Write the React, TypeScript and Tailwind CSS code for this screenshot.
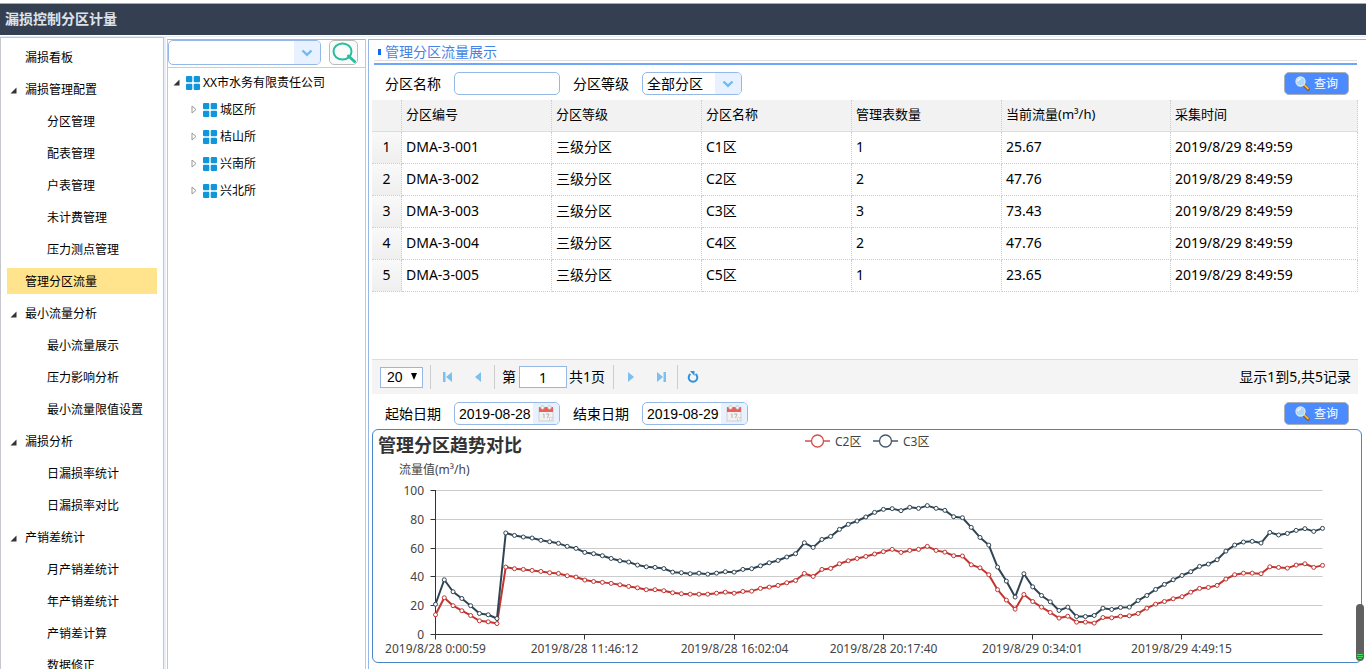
import { useState } from "react";
import type { ReactNode } from "react";

interface MenuItem {
	label: string;
	children?: string[];
}

interface ZoneRow {
	code: string;
	level: string;
	name: string;
	meters: number;
	flow: string;
	time: string;
}

const MENU: MenuItem[] = [
	{ label: "漏损看板" },
	{
		label: "漏损管理配置",
		children: ["分区管理", "配表管理", "户表管理", "未计费管理", "压力测点管理"],
	},
	{ label: "管理分区流量" },
	{
		label: "最小流量分析",
		children: ["最小流量展示", "压力影响分析", "最小流量限值设置"],
	},
	{ label: "漏损分析", children: ["日漏损率统计", "日漏损率对比"] },
	{
		label: "产销差统计",
		children: ["月产销差统计", "年产销差统计", "产销差计算", "数据修正"],
	},
];

const STATIONS = ["城区所", "桔山所", "兴南所", "兴北所"];

const HEADERS = [
	"分区编号",
	"分区等级",
	"分区名称",
	"管理表数量",
	"当前流量(m³/h)",
	"采集时间",
];

const ROWS: ZoneRow[] = [
	{ code: "DMA-3-001", level: "三级分区", name: "C1区", meters: 1, flow: "25.67", time: "2019/8/29 8:49:59" },
	{ code: "DMA-3-002", level: "三级分区", name: "C2区", meters: 2, flow: "47.76", time: "2019/8/29 8:49:59" },
	{ code: "DMA-3-003", level: "三级分区", name: "C3区", meters: 3, flow: "73.43", time: "2019/8/29 8:49:59" },
	{ code: "DMA-3-004", level: "三级分区", name: "C4区", meters: 2, flow: "47.76", time: "2019/8/29 8:49:59" },
	{ code: "DMA-3-005", level: "三级分区", name: "C5区", meters: 1, flow: "23.65", time: "2019/8/29 8:49:59" },
];

const C2 = [
	13.7, 25.5, 20, 16.5, 13.2, 9.5, 8.8, 7.6, 46.8, 45.7, 45.2, 44.5, 43.8, 42.9,
	42.4, 40.8, 39.9, 37.8, 36.8, 36.2, 35.5, 34.5, 33.4, 32.4, 31.1, 31.1, 30.4,
	29, 28.3, 28, 28, 28, 28.7, 29.4, 28.7, 29.9, 30.1, 32, 32.9, 34.1, 35.9,
	37.5, 42.4, 40.3, 45.2, 45.9, 49.1, 51.2, 52.8, 54.2, 55.9, 57.5, 59.1, 57,
	58.4, 59.1, 61.2, 58.4, 57.2, 54.7, 54.5, 48.4, 46.3, 41.5, 31.1, 23.9, 17.6,
	27.8, 22.9, 19, 15.3, 11.4, 12.7, 8.6, 8.6, 7.9, 11.8, 11.6, 12.7, 13, 14.6,
	18.3, 21.1, 22.9, 24.8, 26.2, 29.4, 32, 32.7, 34.1, 38.5, 41.5, 42.6, 42.6,
	42.2, 47, 46.6, 46.1, 48.2, 49.1, 46.6, 48,
];

const C3 = [
	21, 38, 29.7, 25, 20, 14.6, 13.7, 11.1, 70.5, 68.8, 67.7, 67, 65.4, 64.4,
	63.3, 61.2, 59.8, 57, 56.1, 54.7, 52.8, 51.2, 50.3, 48.2, 47, 46.6, 45.8,
	43.3, 42.9, 42.2, 42.6, 41.9, 42.6, 43.6, 43.3, 45.2, 45.7, 47.7, 49.8, 51.4,
	53.8, 56.1, 63.7, 60.5, 66, 68.1, 73, 76.5, 78.8, 81.6, 84.8, 86.9, 87.4, 86,
	88.3, 87.6, 89.5, 87.6, 86.2, 81.8, 81.1, 74.4, 67.4, 62.1, 46.8, 37.1, 26,
	42.2, 33.1, 27.1, 22.7, 16.7, 19, 12.5, 12.5, 13.2, 18.3, 17.4, 18.8, 19,
	23.6, 27.1, 31.3, 34.8, 38, 41, 43.6, 47.3, 48.9, 51.9, 57.9, 62.1, 64.2,
	64.7, 63.5, 70.9, 69.1, 70.2, 72.3, 73.5, 71.6, 73.7,
];

const TIMES = [
	"2019/8/28 0:00:59",
	"2019/8/28 11:46:12",
	"2019/8/28 16:02:04",
	"2019/8/28 20:17:40",
	"2019/8/29 0:34:01",
	"2019/8/29 4:49:15",
];

// Plot area inside the chart's viewBox
const LEFT = 62.5;
const RIGHT = 949.5;
const BOTTOM = 204.5;
const UNIT = 1.44;
const LABEL_EVERY = 17;

const px = (i: number) => LEFT + (i * (RIGHT - LEFT)) / (C2.length - 1);
const py = (v: number) => BOTTOM - v * UNIT;

function OpenArrow() {
	return (
		<svg viewBox="0 0 7 7" className="h-[7px] w-[7px] shrink-0">
			<path d="M6.5 0.5V6.5H0.5Z" fill="#333" />
		</svg>
	);
}

function ClosedArrow() {
	return (
		<svg viewBox="0 0 6 9" className="h-[9px] w-[6px] shrink-0">
			<path d="M1 1L5 4.5L1 8Z" fill="#fff" stroke="#999" />
		</svg>
	);
}

function GridIcon() {
	return (
		<svg viewBox="0 0 14 14" className="h-3.5 w-3.5 shrink-0" fill="#1296db">
			<rect width="6.3" height="6.3" rx="1" />
			<rect x="7.7" width="6.3" height="6.3" rx="1" />
			<rect y="7.7" width="6.3" height="6.3" rx="1" />
			<rect x="7.7" y="7.7" width="6.3" height="6.3" rx="1" />
		</svg>
	);
}

function ComboArrow() {
	return (
		<span className="pointer-events-none absolute inset-y-px right-px flex w-[26px] items-center justify-center rounded-r bg-[#e8f1ff]">
			<svg viewBox="0 0 12 8" className="h-2 w-3">
				<path d="M1.5 1.5L6 5.8L10.5 1.5" fill="none" stroke="#6ebbf0" strokeWidth="2.4" />
			</svg>
		</span>
	);
}

function CalendarIcon() {
	return (
		<svg viewBox="0 0 16 17" className="h-[17px] w-4">
			<rect x="1" y="3" width="14" height="13" fill="#f1f1f1" stroke="#d0d0d0" />
			<rect x="1" y="2" width="14" height="5" fill="#ec5f59" />
			<circle cx="4.5" cy="2.5" r="1.8" fill="#f4f4f4" stroke="#bbb" strokeWidth="0.7" />
			<circle cx="11.5" cy="2.5" r="1.8" fill="#f4f4f4" stroke="#bbb" strokeWidth="0.7" />
			<path d="M5 9.5L6 9V13M8 9H11L9.5 13" fill="none" stroke="#b5b5b5" />
			<path d="M11.5 16V12.5H15Z" fill="#fff" stroke="#c8c8c8" strokeWidth="0.7" />
		</svg>
	);
}

function QueryButton() {
	return (
		<button
			type="button"
			className="ml-auto flex h-[23px] w-[65px] items-center justify-center gap-1 rounded-[5px] border border-[#aab0b8] bg-[#4b8bff] text-xs text-white"
		>
			<svg viewBox="0 0 15 15" className="h-[15px] w-[15px]">
				<path d="M8.5 8.5L13 13" stroke="#8a5a1c" strokeWidth="3.4" strokeLinecap="round" />
				<path d="M9.3 8.9L13 12.5" stroke="#f6b53c" strokeWidth="1.8" strokeLinecap="round" />
				<circle cx="5.5" cy="5.5" r="4.5" fill="#a9d8fa" stroke="#dbe8f3" strokeWidth="1.3" />
				<path d="M3 5.2A2.6 2.6 0 0 1 6 2.8" fill="none" stroke="#fff" strokeWidth="1.2" />
			</svg>
			查询
		</button>
	);
}

function DateField({ id, label, value }: { id: string; label: string; value: string }) {
	return (
		<>
			<label htmlFor={id}>{label}</label>
			<div className="flex h-[23px] w-[106px] overflow-hidden rounded-[5px] border border-[#95b8e7]">
				<input
					id={id}
					type="text"
					defaultValue={value}
					className="w-0 grow pl-1 font-['Liberation_Sans',sans-serif] outline-none"
				/>
				<button
					type="button"
					aria-label={`选择${label}`}
					className="flex w-[26px] items-center justify-center bg-[#e8f1ff]"
				>
					<CalendarIcon />
				</button>
			</div>
		</>
	);
}

function PagerButton({ label, children }: { label: string; children: ReactNode }) {
	return (
		<button
			type="button"
			aria-label={label}
			className="flex h-6 w-[30px] items-center justify-center text-[#7cc0f0]"
		>
			{children}
		</button>
	);
}

function Separator() {
	return <span className="h-6 w-px bg-[#ccc]" />;
}

function Sidebar() {
	const [active, setActive] = useState("管理分区流量");
	return (
		<nav className="w-[164px] shrink-0 overflow-hidden border border-b-0 border-[#c4c8cc] px-1.5 pt-1.5">
			<ul className="flex flex-col gap-1.5">
				{MENU.flatMap((item) => [
					<li key={item.label}>
						<button
							type="button"
							onClick={() => setActive(item.label)}
							className={`flex h-[26px] w-full items-center pt-0.5 pl-[3px] ${
								active === item.label ? "bg-[#ffe48d]" : ""
							}`}
						>
							<span className="w-[15px]">{item.children && <OpenArrow />}</span>
							{item.label}
						</button>
					</li>,
					...(item.children ?? []).map((child) => (
						<li key={child}>
							<button
								type="button"
								onClick={() => setActive(child)}
								className={`flex h-[26px] w-full items-center pt-0.5 pl-10 ${
									active === child ? "bg-[#ffe48d]" : ""
								}`}
							>
								{child}
							</button>
						</li>
					)),
				])}
			</ul>
		</nav>
	);
}

function StationTree() {
	return (
		<aside className="mt-0.5 w-[199px] shrink-0 border border-b-0 border-[#c4c8cc] border-t-[#95b8e7]">
			<div className="flex h-7 items-start gap-2 border-b border-[#ccc]">
				<div className="relative">
					<select
						aria-label="站点"
						className="h-[25px] w-[153px] appearance-none rounded-[5px] border border-[#95b8e7] px-1 outline-none"
					>
						<option />
					</select>
					<ComboArrow />
				</div>
				<button
					type="button"
					aria-label="搜索"
					className="flex h-[25px] w-[29px] items-center justify-center rounded-[5px] border border-[#bbb] bg-[#fafafa]"
				>
					<svg viewBox="0 0 24 21" className="h-[21px] w-6">
						<ellipse cx="10.5" cy="9.5" rx="9" ry="8" fill="none" stroke="#26bf9b" strokeWidth="2" />
						<path d="M16.5 14L22.5 19.5" stroke="#26bf9b" strokeWidth="3" strokeLinecap="round" />
					</svg>
				</button>
			</div>
			<ul className="pt-px">
				<li>
					<div className="flex h-[27px] items-center pl-[5px]">
						<OpenArrow />
						<span className="mr-[3px] ml-1.5">
							<GridIcon />
						</span>
						XX市水务有限责任公司
					</div>
					<ul>
						{STATIONS.map((name) => (
							<li key={name} className="flex h-[27px] items-center pl-[23px]">
								<ClosedArrow />
								<span className="mr-[3px] ml-1.5">
									<GridIcon />
								</span>
								{name}
							</li>
						))}
					</ul>
				</li>
			</ul>
		</aside>
	);
}

function ZoneTable() {
	return (
		<div className="mr-1 min-h-[259px]">
			<table className="w-full table-fixed border-separate border-spacing-0 text-left">
				<colgroup>
					<col className="w-[30px]" />
					<col className="w-[150px]" />
					<col className="w-[150px]" />
					<col className="w-[150px]" />
					<col className="w-[150px]" />
					<col className="w-[169px]" />
					<col />
				</colgroup>
				<thead>
					<tr className="h-8 bg-[#f2f2f2] text-[13px]">
						<th className="border-r border-b border-r-[#ccc] border-b-[#ddd] [border-right-style:dotted]" />
						{HEADERS.map((h) => (
							<th
								key={h}
								className="border-r border-b border-r-[#ccc] border-b-[#ddd] px-1 pb-0.5 font-normal [border-right-style:dotted]"
							>
								{h}
							</th>
						))}
					</tr>
				</thead>
				<tbody>
					{ROWS.map((row, i) => (
						<tr key={row.code} className="h-8">
							<td className="border-r border-b border-dotted border-[#ccc] bg-linear-to-b from-[#f9f9f9] to-[#efefef] pb-0.5 text-center">
								{i + 1}
							</td>
							{[row.code, row.level, row.name, row.meters, row.flow, row.time].map(
								(cell, j) => (
									<td
										key={HEADERS[j]}
										className="border-r border-b border-dotted border-[#ccc] px-1 pb-0.5"
									>
										{cell}
									</td>
								),
							)}
						</tr>
					))}
				</tbody>
			</table>
		</div>
	);
}

function Pager() {
	return (
		<div className="mr-1 flex h-[35px] items-center border-t border-[#ddd] bg-[#f4f4f4] pl-2">
			<div className="relative mr-[7px]">
				<select
					aria-label="每页条数"
					className="block h-[21px] w-[43px] appearance-none border border-[#95b8e7] bg-white pl-1.5 font-['Liberation_Sans',sans-serif] leading-4 outline-none"
				>
					<option>20</option>
				</select>
				<svg viewBox="0 0 6 7" className="pointer-events-none absolute top-1.5 right-1.5 h-[7px] w-1.5">
					<path d="M0 0H6L3 7Z" fill="#000" />
				</svg>
			</div>
			<Separator />
			<div className="flex w-[63px] justify-center">
				<PagerButton label="首页">
					<svg viewBox="0 0 10 12" className="h-3 w-2.5" fill="currentColor">
						<path d="M0 1H2.5V11H0ZM9 1V11L3 6Z" />
					</svg>
				</PagerButton>
				<PagerButton label="上一页">
					<svg viewBox="0 0 8 12" className="h-3 w-2" fill="currentColor">
						<path d="M7 1V11L1 6Z" />
					</svg>
				</PagerButton>
			</div>
			<Separator />
			<label htmlFor="page" className="mr-[3px] ml-[7px]">
				第
			</label>
			<input
				id="page"
				type="text"
				defaultValue="1"
				className="h-[22px] w-12 border border-[#95b8e7] bg-white text-center outline-none"
			/>
			<span className="ml-0.5 w-11">共1页</span>
			<Separator />
			<div className="flex w-[63px] justify-center">
				<PagerButton label="下一页">
					<svg viewBox="0 0 8 12" className="h-3 w-2" fill="currentColor">
						<path d="M1 1V11L7 6Z" />
					</svg>
				</PagerButton>
				<PagerButton label="末页">
					<svg viewBox="0 0 10 12" className="h-3 w-2.5" fill="currentColor">
						<path d="M1 1L7 6L1 11ZM7.5 1H10V11H7.5Z" />
					</svg>
				</PagerButton>
			</div>
			<Separator />
			<PagerButton label="刷新">
				<svg viewBox="0 0 12 14" className="h-3.5 w-3 text-[#2f93dd]">
					<path d="M3.5 4A4.3 4.3 0 1 0 8.5 4" fill="none" stroke="currentColor" strokeWidth="2" />
					<path d="M3 1H7.5V6Z" fill="currentColor" />
				</svg>
			</PagerButton>
			<span className="mr-[7px] ml-auto">显示1到5,共5记录</span>
		</div>
	);
}

function Series({ values, color }: { values: number[]; color: string }) {
	return (
		<g stroke={color}>
			<polyline
				points={values.map((v, i) => `${px(i)},${py(v)}`).join(" ")}
				fill="none"
				strokeWidth="2"
				strokeLinejoin="bevel"
			/>
			{values.map((v, i) => (
				<circle key={px(i)} cx={px(i)} cy={py(v)} r="2" fill="#fff" />
			))}
		</g>
	);
}

function LegendItem({ x, label, color }: { x: number; label: string; color: string }) {
	return (
		<g>
			<path d={`M${x} 11H${x + 25}`} stroke={color} strokeWidth="1.5" />
			<circle cx={x + 12.5} cy="11" r="6" fill="#fff" stroke={color} strokeWidth="1.3" />
			<text x={x + 30} y="16">
				{label}
			</text>
		</g>
	);
}

function TrendChart() {
	return (
		<div className="rounded-md border border-[#4a86c5]">
			<svg viewBox="0 0 988 232" className="block w-full text-xs" fill="#444">
				<text x="5" y="22" className="text-lg font-bold" fill="#333">
					管理分区趋势对比
				</text>
				<LegendItem x={432} label="C2区" color="#d2504b" />
				<LegendItem x={500} label="C3区" color="#44586a" />
				<text x="26" y="44">
					流量值(m³/h)
				</text>
				{[0, 20, 40, 60, 80, 100].map((v) => {
					const y = Math.floor(py(v)) + 0.5;
					return (
						<g key={v}>
							{v > 0 && <path d={`M${LEFT} ${y}H${RIGHT}`} stroke="#ccc" />}
							<path d={`M${LEFT - 5} ${y}H${LEFT}`} stroke="#333" />
							<text x="51" y={y + 4.5} textAnchor="end">
								{v}
							</text>
						</g>
					);
				})}
				<path d={`M${LEFT} 60V${BOTTOM}H${RIGHT}`} fill="none" stroke="#333" />
				{TIMES.map((t, i) => {
					const x = Math.floor(px(i * LABEL_EVERY)) + 0.5;
					return (
						<g key={t}>
							<path d={`M${x} ${BOTTOM}v5`} stroke="#333" />
							<text x={x} y="223" textAnchor="middle">
								{t}
							</text>
						</g>
					);
				})}
				<Series values={C2} color="#c23531" />
				<Series values={C3} color="#2f4554" />
			</svg>
		</div>
	);
}

export default function App() {
	return (
		<div className="relative flex h-screen flex-col overflow-hidden bg-white font-['Noto_Sans','Noto_Sans_CJK_SC',sans-serif] text-xs text-black">
			<header className="mt-[3px] flex h-8 shrink-0 items-center border-t border-[#aaa] bg-[#344052] pb-0.5 pl-[5px]">
				<h1 className="text-sm font-bold text-[#dde2e9]">漏损控制分区计量</h1>
			</header>
			<div className="mt-px flex min-h-0 grow border-t border-[#e6ecf4]">
				<Sidebar />
				<div className="mr-px w-0.5 shrink-0 bg-[#e9eff8]" />
				<StationTree />
				<main className="mt-0.5 ml-0.5 min-w-0 flex-1 border-t border-l border-[#95b8e7] pr-1 pl-[3px] text-sm">
					<div className="mr-[5px] ml-0.5 border-b-2 border-[#6fa5fb] pb-0.5">
						<h2 className="flex h-[21px] items-center border-b border-[#e0e0e0] pt-1 pl-1 leading-4 text-[#4583e8]">
							<span className="mr-1 h-1.5 w-[3px] bg-[#0a6cf5]" />
							管理分区流量展示
						</h2>
					</div>
					<form className="flex items-center gap-[13px] px-[13px] pt-[7px] pb-[5px]">
						<label htmlFor="zone">分区名称</label>
						<input
							id="zone"
							type="text"
							className="h-[23px] w-[106px] rounded-[5px] border border-[#95b8e7] px-1 outline-none"
						/>
						<label htmlFor="level">分区等级</label>
						<div className="relative">
							<select
								id="level"
								className="block h-[23px] w-[100px] appearance-none rounded-[5px] border border-[#95b8e7] pl-1 leading-5 outline-none"
							>
								<option>全部分区</option>
							</select>
							<ComboArrow />
						</div>
						<QueryButton />
					</form>
					<ZoneTable />
					<Pager />
					<form className="flex items-center gap-[13px] px-[13px] pt-2 pb-1">
						<DateField id="start" label="起始日期" value="2019-08-28" />
						<DateField id="end" label="结束日期" value="2019-08-29" />
						<QueryButton />
					</form>
					<TrendChart />
				</main>
			</div>
			{/* floating scroll handle */}
			<div className="absolute right-0.5 bottom-2 flex h-[57px] w-2 flex-col items-center justify-end gap-px rounded-full bg-[#606060] pb-0.5">
				<span className="h-px w-1.5 bg-[#3ddc5a]" />
				<span className="h-px w-1.5 bg-[#3ddc5a]" />
				<span className="h-px w-1 bg-[#3ddc5a]" />
			</div>
		</div>
	);
}
